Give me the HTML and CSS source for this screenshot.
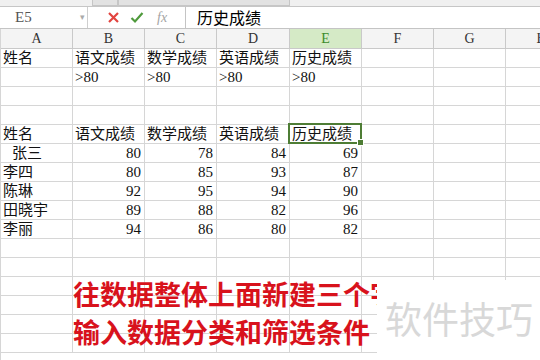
FILE: index.html
```html
<!DOCTYPE html>
<html lang="zh-CN">
<head>
    <meta charset="UTF-8">
    <title>历史成绩</title>
    <link rel="stylesheet" href="styles.css">
</head>
<body>

    <div class="top-strip">
        <div class="tab tab-a"></div>
        <div class="tab tab-b"></div>
    </div>

    <div class="formula-bar">
        <div class="name-box">E5<span class="drop">▾</span></div>
        <div class="tools">
            <svg class="icon" width="13" height="13" viewBox="0 0 13 13">
                <path d="M2 2 L11 11 M11 2 L2 11" stroke="#e2443f" stroke-width="2.2" fill="none"/>
            </svg>
            <svg class="icon" width="14" height="13" viewBox="0 0 14 13">
                <path d="M1.5 7 L5 10.5 L12.5 2" stroke="#4f9a3c" stroke-width="2.2" fill="none"/>
            </svg>
            <span class="fx">fx</span>
        </div>
        <div class="formula-input">历史成绩</div>
    </div>

    <div class="sheet">
        <div class="row head">
            <div class="cell">A</div><div class="cell">B</div><div class="cell">C</div><div class="cell">D</div>
            <div class="cell active">E</div><div class="cell">F</div><div class="cell">G</div><div class="cell">H</div>
        </div>
        <div class="row">
            <div class="cell">姓名</div><div class="cell">语文成绩</div><div class="cell">数学成绩</div><div class="cell">英语成绩</div>
            <div class="cell">历史成绩</div><div class="cell"></div><div class="cell"></div><div class="cell"></div>
        </div>
        <div class="row">
            <div class="cell"></div><div class="cell">&gt;80</div><div class="cell">&gt;80</div><div class="cell">&gt;80</div>
            <div class="cell">&gt;80</div><div class="cell"></div><div class="cell"></div><div class="cell"></div>
        </div>
        <div class="row"><div class="cell"></div><div class="cell"></div><div class="cell"></div><div class="cell"></div><div class="cell"></div><div class="cell"></div><div class="cell"></div><div class="cell"></div></div>
        <div class="row"><div class="cell"></div><div class="cell"></div><div class="cell"></div><div class="cell"></div><div class="cell"></div><div class="cell"></div><div class="cell"></div><div class="cell"></div></div>
        <div class="row">
            <div class="cell">姓名</div><div class="cell">语文成绩</div><div class="cell">数学成绩</div><div class="cell">英语成绩</div>
            <div class="cell selected">历史成绩<span class="handle"></span></div><div class="cell"></div><div class="cell"></div><div class="cell"></div>
        </div>
        <div class="row">
            <div class="cell indent">张三</div><div class="cell num">80</div><div class="cell num">78</div><div class="cell num">84</div>
            <div class="cell num">69</div><div class="cell"></div><div class="cell"></div><div class="cell"></div>
        </div>
        <div class="row">
            <div class="cell">李四</div><div class="cell num">80</div><div class="cell num">85</div><div class="cell num">93</div>
            <div class="cell num">87</div><div class="cell"></div><div class="cell"></div><div class="cell"></div>
        </div>
        <div class="row">
            <div class="cell">陈琳</div><div class="cell num">92</div><div class="cell num">95</div><div class="cell num">94</div>
            <div class="cell num">90</div><div class="cell"></div><div class="cell"></div><div class="cell"></div>
        </div>
        <div class="row">
            <div class="cell">田晓宇</div><div class="cell num">89</div><div class="cell num">88</div><div class="cell num">82</div>
            <div class="cell num">96</div><div class="cell"></div><div class="cell"></div><div class="cell"></div>
        </div>
        <div class="row">
            <div class="cell">李丽</div><div class="cell num">94</div><div class="cell num">86</div><div class="cell num">80</div>
            <div class="cell num">82</div><div class="cell"></div><div class="cell"></div><div class="cell"></div>
        </div>
        <div class="row"><div class="cell"></div><div class="cell"></div><div class="cell"></div><div class="cell"></div><div class="cell"></div><div class="cell"></div><div class="cell"></div><div class="cell"></div></div>
        <div class="row"><div class="cell"></div><div class="cell"></div><div class="cell"></div><div class="cell"></div><div class="cell"></div><div class="cell"></div><div class="cell"></div><div class="cell"></div></div>
        <div class="row"><div class="cell"></div><div class="cell"></div><div class="cell"></div><div class="cell"></div><div class="cell"></div><div class="cell"></div><div class="cell"></div><div class="cell"></div></div>
        <div class="row"><div class="cell"></div><div class="cell"></div><div class="cell"></div><div class="cell"></div><div class="cell"></div><div class="cell"></div><div class="cell"></div><div class="cell"></div></div>
        <div class="row"><div class="cell"></div><div class="cell"></div><div class="cell"></div><div class="cell"></div><div class="cell"></div><div class="cell"></div><div class="cell"></div><div class="cell"></div></div>
        <div class="row"><div class="cell"></div><div class="cell"></div><div class="cell"></div><div class="cell"></div><div class="cell"></div><div class="cell"></div><div class="cell"></div><div class="cell"></div></div>

        <!-- caption pasted over the sheet -->
        <div class="caption">
            <p>往数据整体上面新建三个字</p>
            <p>输入数据分类和筛选条件</p>
        </div>

        <div class="watermark">软件技巧</div>
    </div>

</body>
</html>
```

FILE: styles.css
```css
:root {
    --grid-line: #d6d6d6;
    --head-bg: #f4f4f4;
    --head-line: #c9c9c9;
    --select-green: #4e7d35;
    --caption-red: #d8121c;
}

body {
    margin: 0;
    width: 540px;
    height: 360px;
    overflow: hidden;
    background: white;
    font-family: 'Liberation Serif', 'Noto Sans CJK SC', serif;
    color: #111;
}

/* top toolbar remnant */
.top-strip {
    position: relative;
    height: 6px;
    background: #f0f0f0;
    border-bottom: 1px solid #c6c6c6;
}

.tab {
    position: absolute;
    top: 0;
    height: 5px;
    background: #e2e2e2;
    border: 1px solid #c6c6c6;
    border-top: none;
}

.tab-a { left: 92px; width: 24px; }
.tab-b { left: 118px; width: 170px; }

/* formula bar */
.formula-bar {
    display: flex;
    height: 21px;
    border-bottom: 1px solid #c4c4c4;
    background: white;
}

.name-box {
    position: relative;
    width: 88px;
    padding-left: 15px;
    box-sizing: border-box;
    border-right: 1px solid #cfcfcf;
    font-size: 15px;
    line-height: 21px;
    color: #555;
}

.drop {
    position: absolute;
    right: 2px;
    top: 0;
    font-size: 9px;
    color: #aaa;
}

.tools {
    display: flex;
    align-items: center;
    width: 98px;
    padding-left: 19px;
    box-sizing: border-box;
    gap: 10px;
    border-right: 1px solid #c4c4c4;
}

.fx {
    margin-left: 3px;
    font-style: italic;
    font-size: 14px;
    color: #a4a4a4;
}

.formula-input {
    flex: 1;
    padding-left: 11px;
    font-family: 'Noto Sans CJK SC', sans-serif;
    font-size: 16px;
    line-height: 21px;
    color: #000;
}

/* sheet grid */
.sheet {
    position: relative;
    border-left: 1px solid var(--grid-line);
    height: 331px;
}

.row {
    display: grid;
    grid-template-columns: 72px 72px 72px 73px 72px 72px 72px 72px;
    height: 19px;
}

.cell {
    position: relative;
    box-sizing: border-box;
    border-right: 1px solid var(--grid-line);
    border-bottom: 1px solid var(--grid-line);
    padding: 0 2px;
    font-size: 15px;
    line-height: 18px;
    white-space: nowrap;
}

.cell.num {
    text-align: right;
    padding-right: 3px;
}

.cell.indent {
    padding-left: 11px;
}

.head {
    height: 20px;
    background: var(--head-bg);
}

.head .cell {
    text-align: center;
    font-size: 14px;
    line-height: 19px;
    color: #333;
    border-right-color: var(--head-line);
    border-bottom-color: var(--head-line);
}

.head .cell.active {
    background: #d5eac6;
    color: #3d8a2a;
}

.selected::after {
    content: "";
    position: absolute;
    top: -2px;
    left: -2px;
    right: -1px;
    bottom: -1px;
    border: 2px solid var(--select-green);
}

.handle {
    position: absolute;
    right: -3px;
    bottom: -3px;
    width: 5px;
    height: 5px;
    background: var(--select-green);
    border: 1px solid white;
    z-index: 1;
}

/* overlays */
.caption {
    position: absolute;
    left: 72px;
    top: 246px;
    font-family: 'Noto Sans CJK SC', sans-serif;
    font-weight: bold;
    font-size: 27px;
    line-height: 38px;
    color: var(--caption-red);
    white-space: nowrap;
}

.caption p {
    margin: 0;
}

.watermark {
    position: absolute;
    left: 376px;
    top: 251px;
    right: 0;
    bottom: 0;
    padding: 16px 0 0 8px;
    background: white;
    font-family: 'Noto Sans CJK SC', sans-serif;
    font-size: 37px;
    line-height: 44px;
    color: #d8d8d8;
}
```
